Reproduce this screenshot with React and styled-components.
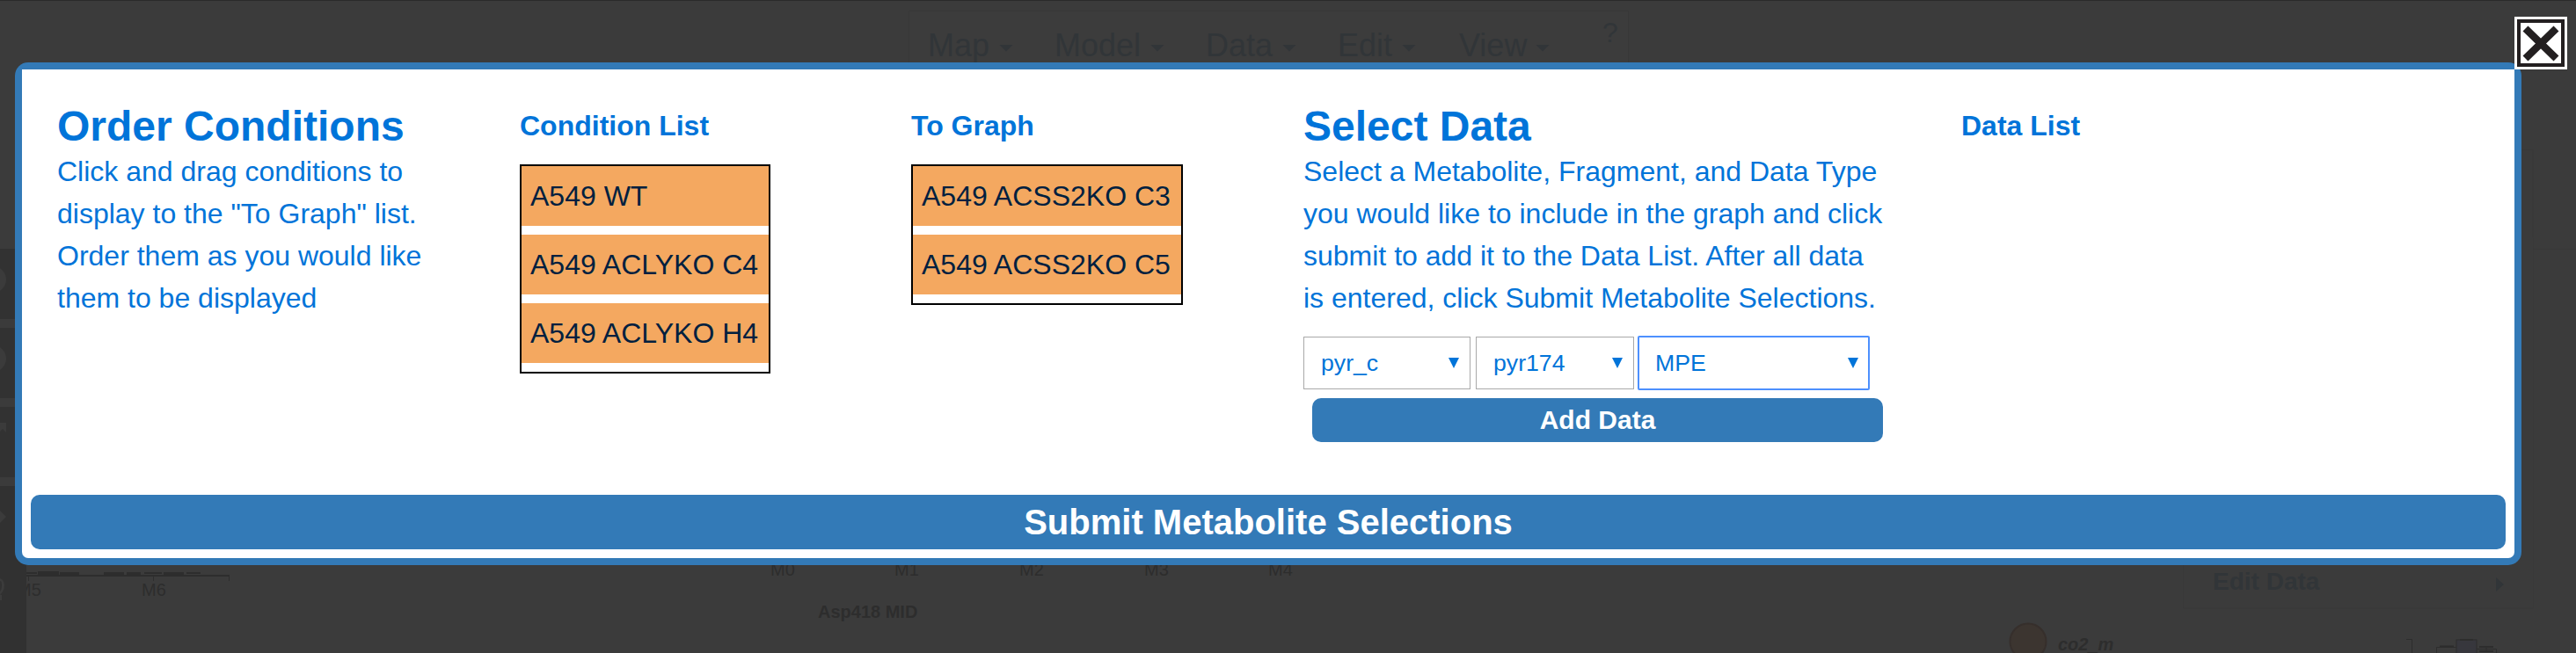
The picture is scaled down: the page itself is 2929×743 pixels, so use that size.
import React from 'react';
import styled, { createGlobalStyle } from 'styled-components';

const Global = createGlobalStyle`
  * { box-sizing: border-box; }
  html, body { margin: 0; padding: 0; }
  body { background: #3b3b3b; font-family: 'Liberation Sans', Arial, sans-serif; overflow: hidden; }
`;

const Page = styled.div`
  position: relative;
  width: 2929px;
  height: 743px;
  overflow: hidden;
  background: #3b3b3b;
  border-top: 1px solid #2a2a2a;
  padding: 70px 0 0 17px;
`;

const MapCanvas = styled.svg`
  position: absolute;
  left: 0;
  top: 0;
  font-family: 'Liberation Sans', Arial, sans-serif;
`;

const Modal = styled.section`
  position: relative;
  width: 2850px;
  height: 572px;
  border-radius: 15px;
  background: #337ab7;
  padding: 8px;
`;

const ModalBody = styled.div`
  height: 556px;
  background: #fff;
  border-radius: 0 0 7px 7px;
  padding: 16px 10px 10px;
  display: flex;
  flex-direction: column;
  justify-content: space-between;
`;

const Columns = styled.div`
  display: flex;
  padding-left: 30px;
  color: #0074d9;
`;

const Column = styled.div`
  flex: none;
  width: ${(p) => p.$width}px;
  padding-top: ${(p) => (p.$list ? 24 : 22)}px;
`;

const Title = styled.h1`
  margin: 0;
  font-size: 48px;
  line-height: 54px;
  font-weight: bold;
`;

const Lead = styled.p`
  margin: 0;
  font-size: 32px;
  line-height: 48px;
  white-space: nowrap;
`;

const ListTitle = styled.h2`
  margin: 0 0 20px;
  font-size: 32px;
  line-height: 48px;
  font-weight: bold;
`;

const List = styled.ul`
  width: ${(p) => p.$width}px;
  margin: 0;
  padding: 0;
  list-style: none;
  border: 2px solid #000;
`;

const Item = styled.li`
  margin-bottom: 10px;
  padding: 10px;
  font-size: 32px;
  line-height: 48px;
  color: #001f3f;
  background: #f4a860;
  white-space: nowrap;
`;

const Selects = styled.div`
  display: flex;
  align-items: center;
  margin-top: 19px;
  height: 62px;
`;

const Select = styled.div`
  display: flex;
  align-items: center;
  justify-content: space-between;
  width: ${(p) => p.$width}px;
  height: ${(p) => (p.$focus ? 62 : 60)}px;
  margin-right: ${(p) => p.$gap || 0}px;
  padding: 0 ${(p) => (p.$focus ? 11 : 12)}px 0 ${(p) => (p.$focus ? 18 : 19)}px;
  border: ${(p) => (p.$focus ? '2px solid #4d90fe' : '1px solid #a9a9a9')};
  border-radius: ${(p) => (p.$focus ? 2 : 0)}px;
  font-size: 26.67px;
`;

const Button = styled.button`
  display: block;
  border: 0;
  color: #fff;
  background: #337ab7;
  font-family: inherit;
  font-weight: bold;
  text-align: center;
  padding: 0;
`;

const AddButton = styled(Button)`
  width: 649px;
  height: 50px;
  margin: 9px 0 0 10px;
  border-radius: 10px;
  font-size: 30px;
`;

const SubmitButton = styled(Button)`
  width: 2814px;
  height: 62px;
  border-radius: 10px;
  font-size: 40px;
`;

const Close = styled.button`
  position: absolute;
  left: 2859px;
  top: 18px;
  width: 60px;
  height: 60px;
  border: 0;
  padding: 0;
  background: #fff;
  svg { display: block; }
`;

const Arrow = () => (
  <svg width="12" height="12" viewBox="0 0 12 12"><path d="M0 0H12L6 12Z" fill="#0074d9" /></svg>
);

const menu = [['Map', 1055, 1137], ['Model', 1199, 1309], ['Data', 1371, 1459], ['Edit', 1521, 1595], ['View', 1659, 1747]];
const ticks = [['M0', 890], ['M1', 1031], ['M2', 1173], ['M3', 1315], ['M4', 1456]];

const Backdrop = () => (
  <MapCanvas width="2929" height="742" viewBox="0 1 2929 742">
    <rect x="1033.5" y="12.5" width="818" height="70" fill="#3c3c3c" stroke="#383838" />
    {menu.map(([label, x, caret]) => (
      <g key={label} fill="#313538">
        <text x={x} y="64" fontSize="36">{label}</text>
        <path d={`M${caret - 0.5} 51h15l-7.500 7.500z`} />
      </g>
    ))}
    <text x="1822" y="48" fontSize="32" fill="#313538">?</text>
    <g fill="#2d2d2d">
      <path d="M30 651h12v2H30zM43 650h24v4H43zM68 651h22v3H68zM118 651h23v3h-23zM144 651h16v3h-16zM164 651h20v2h-20zM186 651h23v3h-23zM212 651h16v2h-16zM30 654h231v2H30zM32 655h1v6h-1zM174 655h1v6h-1zM260 655h1v6h-1z" />
      <text x="19" y="678" fontSize="20">M5</text>
      <text x="161" y="678" fontSize="20">M6</text>
      {ticks.map(([label, x]) => (
        <text key={label} x={x} y="655" textAnchor="middle" fontSize="20">{label}</text>
      ))}
      <text x="930" y="703" fontSize="20" fontWeight="bold">Asp418 MID</text>
    </g>
    {[283, 373, 463].map((y) => (
      <rect key={y} x="0" y={y} width="30" height="80" fill="#323232" />
    ))}
    <rect x="0" y="553" width="30" height="190" fill="#313131" />
    <g fill="#3b3b3b">
      <circle cx="-8" cy="318" r="15" />
      <circle cx="-8" cy="408" r="15" />
      <path d="M0 481h7v11l-4-4-3 3z" />
      <path d="M0 581l7 7-7 7z" />
      <path d="M0 658q5 2 5 8t-5 11v-4q2-2 2-7t-2-5zM0 677h2v6H0z" />
    </g>
    <path d="M2867 170.500h13v100M2881 283.500h48" fill="none" stroke="#383838" />
    <path d="M2482.500 640v52h398v-421" fill="none" stroke="#383838" />
    <text x="2516" y="671" fontSize="28" fontWeight="bold" fill="#313538">Edit Data</text>
    <path d="M2838 657l9 8-9 8z" fill="#313538" />
    <circle cx="2306" cy="730" r="20.500" fill="#3c3530" stroke="#362f2c" strokeWidth="2" />
    <text x="2340" y="740" fontSize="20" fontWeight="bold" fontStyle="italic" fill="#2d2d2d">co2_m</text>
    <g fill="none" stroke="#2d2d2d" strokeWidth="1">
      <rect x="2793" y="728" width="23" height="20" fill="#37373d" />
      <path d="M2736 727.500h6.500v16M2770.500 743v-6.500h22M2816 738.500h22.500v5M2827 736v5" />
      <path d="M2774 735.500h16M2797 728h15M2819 736h16M2819 741h16" strokeWidth="2" />
    </g>
  </MapCanvas>
);

export default function App() {
  return (
    <Page>
      <Global />
      <Backdrop />
      <Modal>
        <ModalBody>
          <Columns>
            <Column $width={526}>
              <Title>Order Conditions</Title>
              <Lead>
                Click and drag conditions to<br />display to the "To Graph" list.<br />
                Order them as you would like<br />them to be displayed
              </Lead>
            </Column>
            <Column $width={445} $list>
              <ListTitle>Condition List</ListTitle>
              <List $width={285}>
                <Item>A549 WT</Item>
                <Item>A549 ACLYKO C4</Item>
                <Item>A549 ACLYKO H4</Item>
              </List>
            </Column>
            <Column $width={446} $list>
              <ListTitle>To Graph</ListTitle>
              <List $width={309}>
                <Item>A549 ACSS2KO C3</Item>
                <Item>A549 ACSS2KO C5</Item>
              </List>
            </Column>
            <Column $width={748}>
              <Title>Select Data</Title>
              <Lead>
                Select a Metabolite, Fragment, and Data Type<br />
                you would like to include in the graph and click<br />
                submit to add it to the Data List. After all data<br />
                is entered, click Submit Metabolite Selections.
              </Lead>
              <Selects>
                <Select $width={190} $gap={6}>pyr_c<Arrow /></Select>
                <Select $width={180} $gap={4}>pyr174<Arrow /></Select>
                <Select $width={264} $focus>MPE<Arrow /></Select>
              </Selects>
              <AddButton>Add Data</AddButton>
            </Column>
            <Column $width={400} $list>
              <ListTitle>Data List</ListTitle>
            </Column>
          </Columns>
          <SubmitButton>Submit Metabolite Selections</SubmitButton>
        </ModalBody>
      </Modal>
      <Close aria-label="Close">
        <svg width="60" height="60" viewBox="0 0 60 60" fill="none" stroke="#231f20">
          <rect x="5" y="5" width="50" height="50" strokeWidth="4" />
          <path d="M12.500 13.500L47.500 47.500M47.500 13.500L12.500 47.500" strokeWidth="8.500" />
        </svg>
      </Close>
    </Page>
  );
}
